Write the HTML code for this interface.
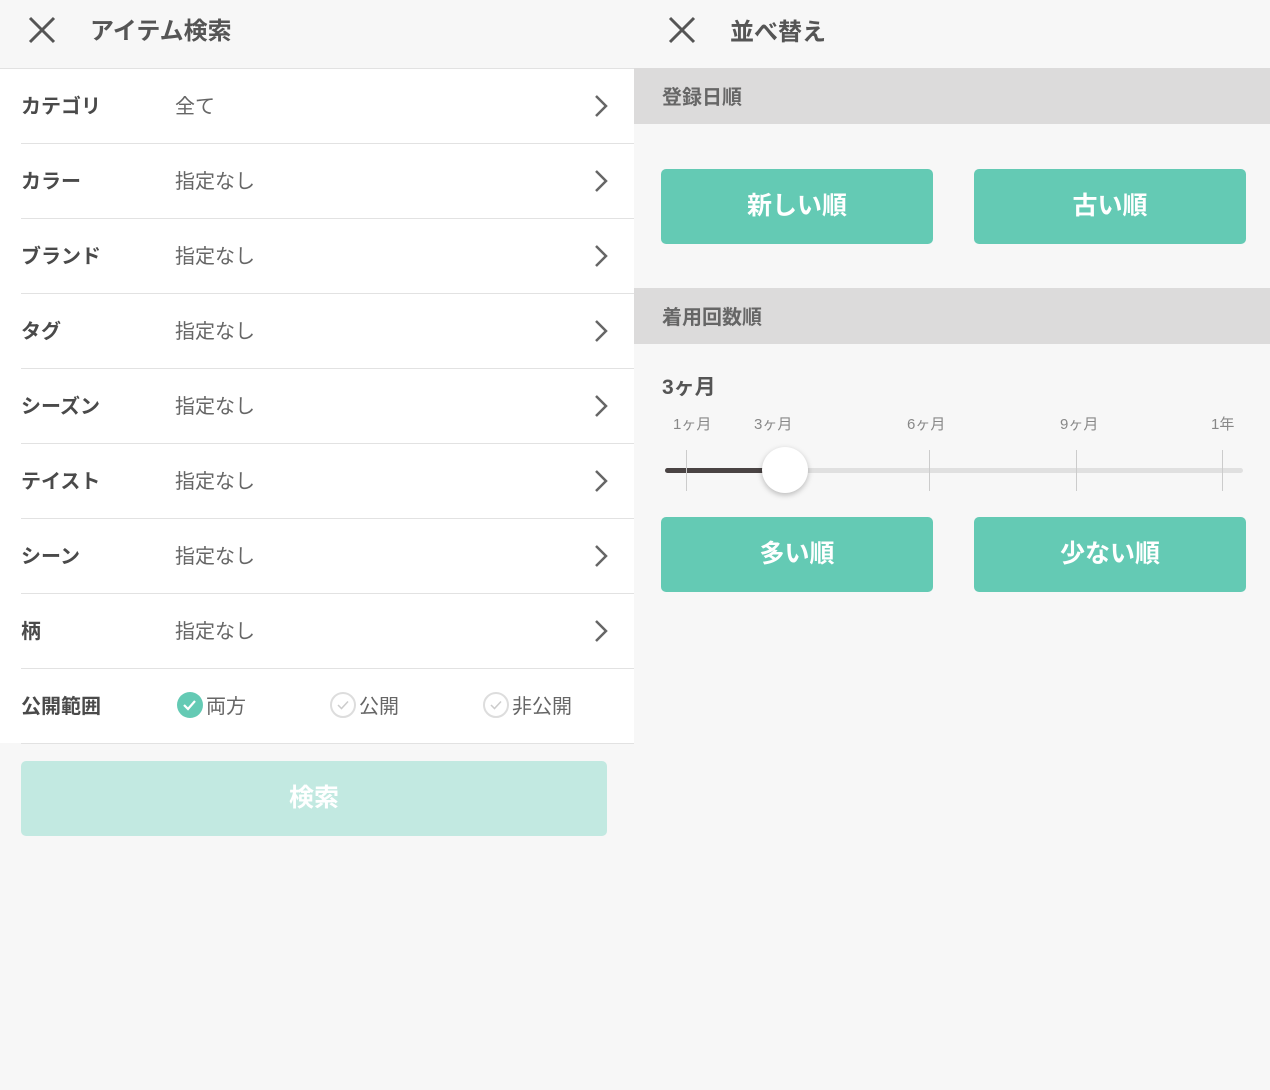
<!DOCTYPE html>
<html><head><meta charset="utf-8"><style>
*{margin:0;padding:0;box-sizing:border-box}
body{width:1270px;height:1090px;background:#f7f7f7;position:relative;overflow:hidden;font-family:"Liberation Sans","Noto Sans CJK JP",sans-serif;color:#555}
.a{position:absolute}
.t{font-size:24px;font-weight:bold;color:#555}
.list{left:0;top:68px;width:634px;height:675px;background:#fff;border-top:1px solid #e2e2e2}
.row{position:absolute;left:21px;width:613px;height:75px;border-bottom:1px solid #e2e2e2}
.lab{position:absolute;left:0;top:21px;font-size:20px;font-weight:bold;color:#4a4a4a}
.val{position:absolute;left:154px;top:21px;font-size:20px;color:#666}
.chev{position:absolute;left:573px;top:25px}
.btn{position:absolute;background:#64cab4;border-radius:5px;color:#fff;font-size:25px;font-weight:bold;text-align:center;line-height:75px;height:75px;width:272px}
.sec{position:absolute;left:634px;width:636px;height:56px;background:#dcdbdb;font-size:20px;font-weight:bold;color:#666;padding:13px 0 0 28px}
.tk{position:absolute;font-size:15px;color:#888;top:413px}
.vl{position:absolute;top:450px;width:1px;height:41px;background:#ccc}
</style></head><body>
<svg class="a" style="left:28px;top:16px" width="28" height="28"><path d="M2 2L26 26M26 2L2 26" stroke="#555" stroke-width="3"/></svg>
<div class="a t" style="left:90px;top:11px">アイテム検索</div>
<svg class="a" style="left:668px;top:16px" width="28" height="28"><path d="M2 2L26 26M26 2L2 26" stroke="#555" stroke-width="3"/></svg>
<div class="a t" style="left:730px;top:12px">並べ替え</div>

<div class="a list">
<div class="row" style="top:0"><div class="lab">カテゴリ</div><div class="val">全て</div><svg class="chev" width="14" height="24"><path d="M2 2L12 12L2 22" stroke="#666" stroke-width="2.5" fill="none"/></svg></div>
<div class="row" style="top:75px"><div class="lab">カラー</div><div class="val">指定なし</div><svg class="chev" width="14" height="24"><path d="M2 2L12 12L2 22" stroke="#666" stroke-width="2.5" fill="none"/></svg></div>
<div class="row" style="top:150px"><div class="lab">ブランド</div><div class="val">指定なし</div><svg class="chev" width="14" height="24"><path d="M2 2L12 12L2 22" stroke="#666" stroke-width="2.5" fill="none"/></svg></div>
<div class="row" style="top:225px"><div class="lab">タグ</div><div class="val">指定なし</div><svg class="chev" width="14" height="24"><path d="M2 2L12 12L2 22" stroke="#666" stroke-width="2.5" fill="none"/></svg></div>
<div class="row" style="top:300px"><div class="lab">シーズン</div><div class="val">指定なし</div><svg class="chev" width="14" height="24"><path d="M2 2L12 12L2 22" stroke="#666" stroke-width="2.5" fill="none"/></svg></div>
<div class="row" style="top:375px"><div class="lab">テイスト</div><div class="val">指定なし</div><svg class="chev" width="14" height="24"><path d="M2 2L12 12L2 22" stroke="#666" stroke-width="2.5" fill="none"/></svg></div>
<div class="row" style="top:450px"><div class="lab">シーン</div><div class="val">指定なし</div><svg class="chev" width="14" height="24"><path d="M2 2L12 12L2 22" stroke="#666" stroke-width="2.5" fill="none"/></svg></div>
<div class="row" style="top:525px"><div class="lab">柄</div><div class="val">指定なし</div><svg class="chev" width="14" height="24"><path d="M2 2L12 12L2 22" stroke="#666" stroke-width="2.5" fill="none"/></svg></div>
<div class="row" style="top:600px"><div class="lab">公開範囲</div>
<svg class="a" style="left:155px;top:22px" width="28" height="28"><circle cx="14" cy="14" r="13" fill="#64cab4"/><path d="M8 14L12 18L19 10" stroke="#fff" stroke-width="2.2" fill="none"/></svg>
<div class="val" style="left:185px">両方</div>
<svg class="a" style="left:308px;top:22px" width="28" height="28"><circle cx="14" cy="14" r="12" fill="none" stroke="#ddd" stroke-width="2"/><path d="M9 14L12.5 17.5L19 10.5" stroke="#ccc" stroke-width="1.5" fill="none"/></svg>
<div class="val" style="left:338px">公開</div>
<svg class="a" style="left:461px;top:22px" width="28" height="28"><circle cx="14" cy="14" r="12" fill="none" stroke="#ddd" stroke-width="2"/><path d="M9 14L12.5 17.5L19 10.5" stroke="#ccc" stroke-width="1.5" fill="none"/></svg>
<div class="val" style="left:491px">非公開</div>
</div>
</div>
<div class="btn" style="left:21px;top:761px;width:586px;background:#c2e9e1">検索</div>

<div class="sec" style="top:68px">登録日順</div>
<div class="btn" style="left:661px;top:169px">新しい順</div>
<div class="btn" style="left:974px;top:169px">古い順</div>
<div class="sec" style="top:288px">着用回数順</div>
<div class="a" style="left:662px;top:371px;font-size:21px;font-weight:bold;color:#555">3ヶ月</div>
<div class="tk" style="left:673px">1ヶ月</div>
<div class="tk" style="left:754px">3ヶ月</div>
<div class="tk" style="left:907px">6ヶ月</div>
<div class="tk" style="left:1060px">9ヶ月</div>
<div class="tk" style="left:1211px">1年</div>
<div class="a" style="left:665px;top:468px;width:578px;height:5px;border-radius:3px;background:#e0e0e0"></div>
<div class="a" style="left:665px;top:468px;width:120px;height:5px;border-radius:3px;background:#4a4444"></div>
<div class="vl" style="left:686px"></div>
<div class="vl" style="left:929px"></div>
<div class="vl" style="left:1076px"></div>
<div class="vl" style="left:1222px"></div>
<div class="a" style="left:762px;top:447px;width:46px;height:46px;border-radius:50%;background:#fff;box-shadow:0 2px 6px rgba(0,0,0,.25)"></div>
<div class="btn" style="left:661px;top:517px">多い順</div>
<div class="btn" style="left:974px;top:517px">少ない順</div>
</body></html>
